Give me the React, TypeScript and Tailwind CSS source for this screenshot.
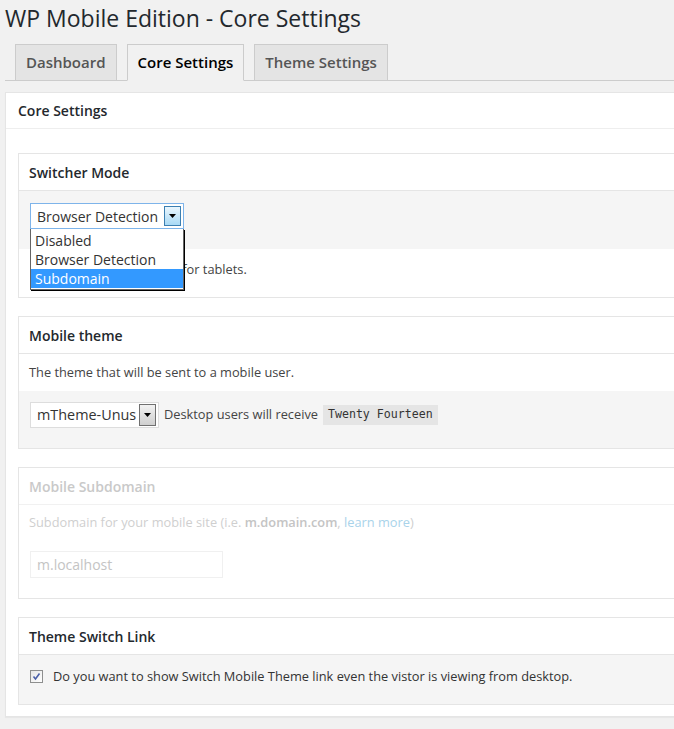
import React from "react";

const font = { fontFamily: '"Open Sans", "Noto Sans", sans-serif' };

function Tab({ label, active }: { label: string; active?: boolean }) {
  return (
    <div
      className={
        "h-[37px] px-[10px] flex items-center border border-[#ccc] text-[15px] font-semibold mb-[-1px] " +
        (active ? "bg-[#f1f1f1] text-black border-b-[#f1f1f1]" : "bg-[#e4e4e4] text-[#555]")
      }
    >
      {label}
    </div>
  );
}

function BoxHeader({ title, faded }: { title: string; faded?: boolean }) {
  return (
    <div
      className={
        "h-[37px] flex items-center px-[10px] border-b text-[14px] font-semibold " +
        (faded ? "text-[#c9c9c9] border-[#f1f1f1]" : "text-[#23282d] border-[#e5e5e5]")
      }
    >
      {title}
    </div>
  );
}

function ArrowButton({ blue }: { blue?: boolean }) {
  return (
    <div
      className={
        "w-[17px] shrink-0 flex items-center justify-center border " +
        (blue
          ? "h-[20px] border-[#3c7fb1] bg-gradient-to-b from-[#eaf6fd] to-[#a7d9f5]"
          : "h-[22px] border-[#707070] bg-gradient-to-b from-[#f2f2f2] to-[#cfcfcf]")
      }
    >
      <svg width="7" height="4" viewBox="0 0 7 4">
        <path d="M0 0h7L3.5 4z" fill="#000" />
      </svg>
    </div>
  );
}

export default function App() {
  return (
    <div className="w-[674px] h-[729px] overflow-hidden bg-[#f1f1f1] text-[#444]" style={font}>
      <h1 className="pl-[5px] pt-[4px] text-[23px] leading-[29px] text-[#23282d]">
        WP Mobile Edition - Core Settings
      </h1>

      <div className="mt-[11px] ml-[5px] pl-[10px] flex gap-[10px] border-b border-[#ccc]">
        <Tab label="Dashboard" />
        <Tab label="Core Settings" active />
        <Tab label="Theme Settings" />
      </div>

      <div className="mt-[11px] ml-[5px] w-[720px] bg-white border border-[#e5e5e5] shadow-[0_1px_1px_rgba(0,0,0,0.04)]">
        <div className="h-[36px] flex items-center px-[12px] border-b border-[#eee] text-[14px] font-semibold text-[#23282d]">
          Core Settings
        </div>

        <div className="px-[12px] pt-[24px] pb-[11px] flex flex-col gap-[18px]">
          {/* Switcher Mode */}
          <div className="border border-[#e5e5e5] bg-white">
            <BoxHeader title="Switcher Mode" />
            <div className="bg-[#f5f5f5] px-[11px] pt-[12px] pb-[20px]">
              <div className="relative w-[154px]">
                <div className="h-[26px] flex items-center justify-between border border-[#7eb4ea] bg-white pl-[6px] pr-[2px] text-[14px] text-[#333]">
                  <span>Browser Detection</span>
                  <ArrowButton blue />
                </div>
                <div className="absolute left-0 top-[26px] w-[154px] bg-white border border-[#646464] border-t-0 shadow-[1px_1px_0_#000] text-[14px] leading-[19px] text-[#333] pt-[2px] pb-[1px] z-10">
                  <div className="px-[4px]">Disabled</div>
                  <div className="px-[4px]">Browser Detection</div>
                  <div className="px-[4px] bg-[#3399ff] text-white">Subdomain</div>
                </div>
              </div>
            </div>
            <div className="h-[48px] pt-[11px] px-[11px] text-[12.8px] leading-[19px] text-[#444]">
              Mobile theme is disabled for tablets.
            </div>
          </div>

          {/* Mobile theme */}
          <div className="border border-[#e5e5e5] bg-white">
            <BoxHeader title="Mobile theme" />
            <div className="h-[37px] flex items-center px-[10px] text-[12.8px] text-[#444]">
              The theme that will be sent to a mobile user.
            </div>
            <div className="bg-[#f5f5f5] h-[57px] px-[11px] pt-[11px]">
              <div className="flex items-center gap-[5px] text-[12.8px] text-[#444]">
                <div className="w-[129px] h-[26px] flex items-center justify-between border border-[#ddd] bg-white pl-[6px] pr-[2px] text-[14.4px] text-[#333] whitespace-nowrap overflow-hidden">
                  <span className="overflow-hidden">mTheme-Unus</span>
                  <ArrowButton />
                </div>
                <span>Desktop users will receive</span>
                <code
                  className="bg-[#e5e5e5] px-[5px] h-[20px] flex items-center text-[11.6px] text-[#333]"
                  style={{ fontFamily: '"DejaVu Sans Mono", monospace' }}
                >
                  Twenty Fourteen
                </code>
              </div>
            </div>
          </div>

          {/* Mobile Subdomain */}
          <div className="border border-[#e5e5e5] bg-white h-[132px]">
            <BoxHeader title="Mobile Subdomain" faded />
            <div className="h-[36px] flex items-center px-[10px] text-[12.8px] text-[#cfcfcf]">
              Subdomain for your mobile site (i.e.&nbsp;
              <span className="font-semibold text-[#c4c4c4]">m.domain.com</span>,&nbsp;
              <span className="text-[#a9d3ea]">learn more</span>)
            </div>
            <div className="px-[11px] pt-[10px]">
              <div className="w-[193px] h-[27px] flex items-center border border-[#f0f0f0] px-[6px] text-[14px] text-[#c4c4c4]">
                m.localhost
              </div>
            </div>
          </div>

          {/* Theme Switch Link */}
          <div className="border border-[#e5e5e5] bg-white">
            <BoxHeader title="Theme Switch Link" />
            <div className="bg-[#f5f5f5] h-[49px] flex items-start pt-[12px] px-[11px] gap-[10px] text-[12.8px] leading-[19px] text-[#333]">
              <div className="mt-[3px] w-[13px] h-[13px] border border-[#8e8f8f] bg-gradient-to-br from-[#e6e6e6] to-[#ffffff] flex items-center justify-center">
                <svg width="9" height="9" viewBox="0 0 9 9">
                  <path d="M1.5 4.5 L3.5 7 L7.5 1.5" stroke="#4a5fa8" strokeWidth="1.6" fill="none" />
                </svg>
              </div>
              <span>Do you want to show Switch Mobile Theme link even the vistor is viewing from desktop.</span>
            </div>
          </div>
        </div>
      </div>
    </div>
  );
}
